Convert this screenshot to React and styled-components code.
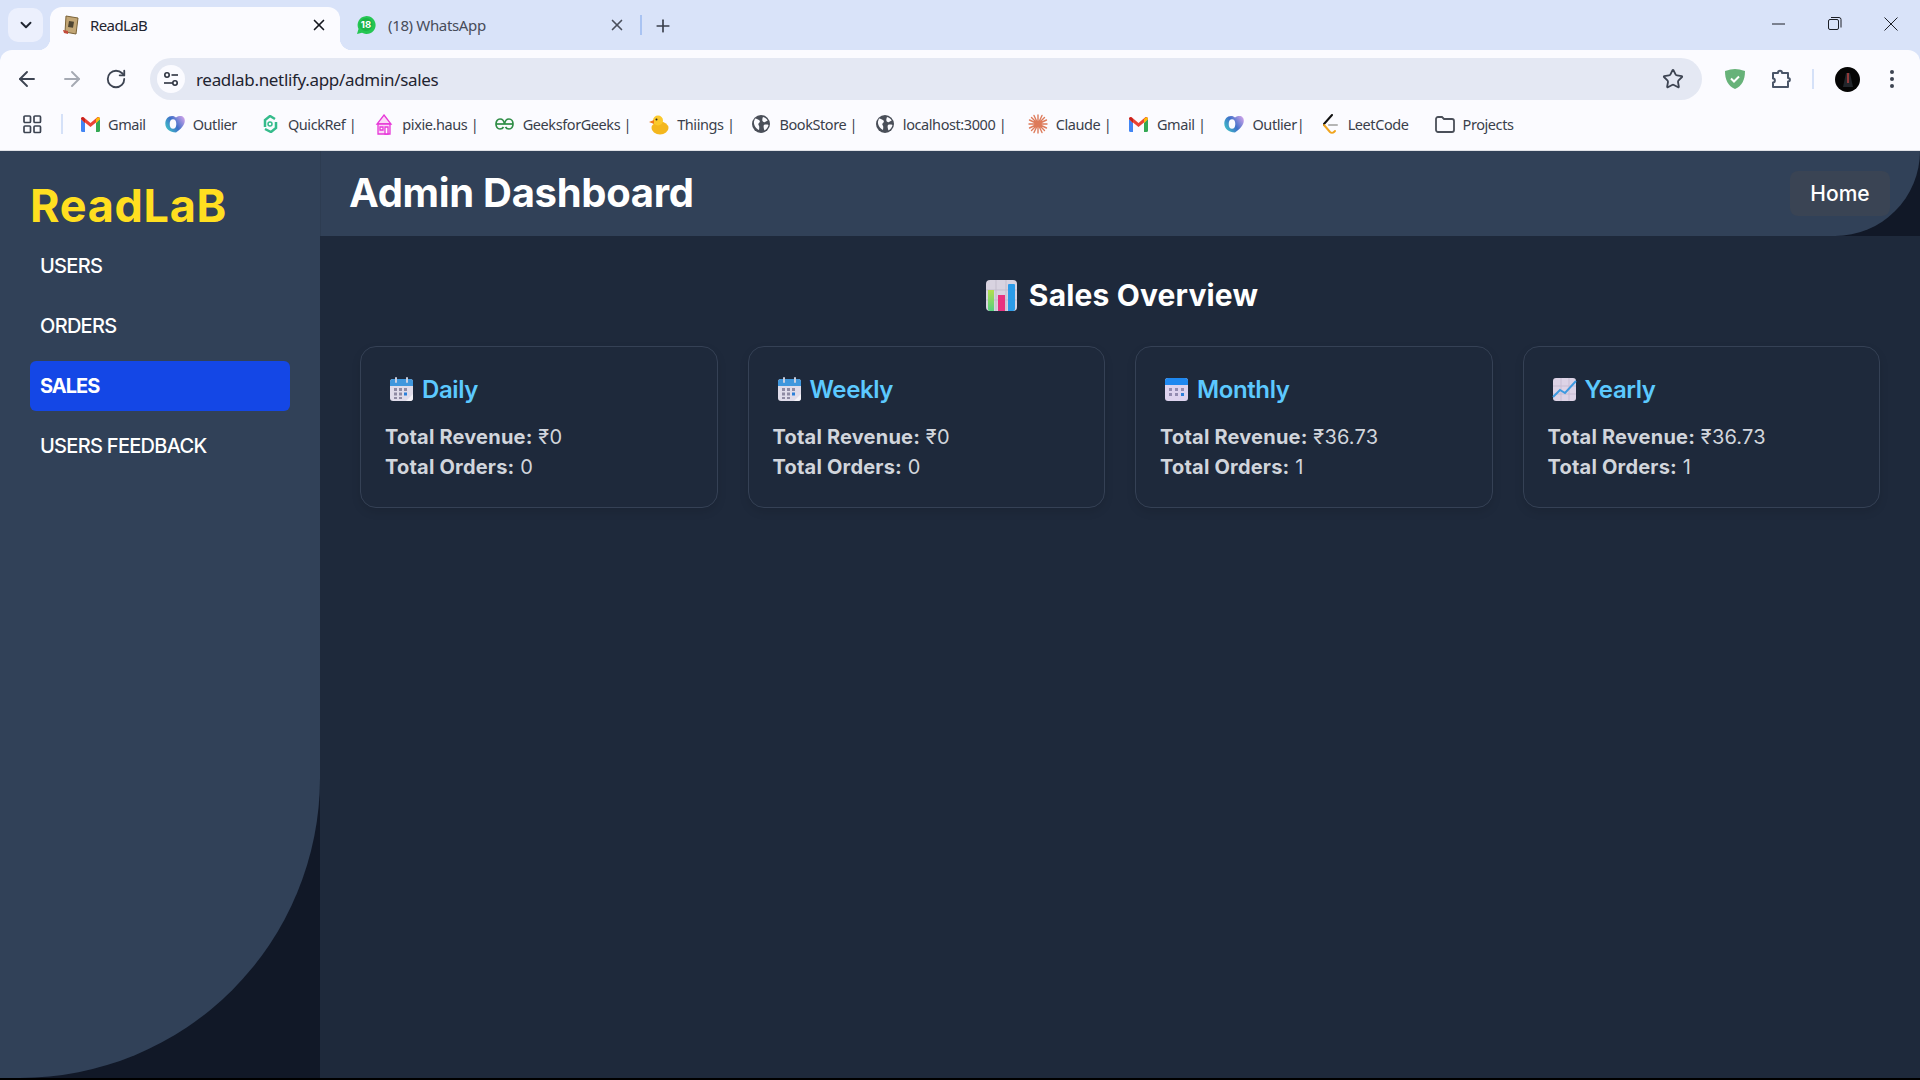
import React from "react";
import styled, { createGlobalStyle } from "styled-components";
import { ArrowLeft, ArrowRight, RotateCw, Star, X, Plus, ChevronDown } from "lucide-react";

const Global = createGlobalStyle`
  html, body { margin: 0; padding: 0; background: #000; }
  #root { width: 1920px; height: 1080px; overflow: hidden; }
  * { box-sizing: border-box; }
`;

const uiFont = `"Noto Sans", "Open Sans", sans-serif`;
const appFont = `Inter, "Noto Sans", sans-serif`;

const Page = styled.div`
  width: 1920px;
  height: 1078px;
  display: flex;
  flex-direction: column;
  background: #d9e3f9;
`;

/* ---------- browser chrome ---------- */
const TabStrip = styled.div`
  height: 50px;
  flex: none;
  display: flex;
  align-items: flex-end;
  padding-left: 8px;
  font-family: ${uiFont};
`;
const TabMenu = styled.div`
  width: 35px;
  height: 34px;
  margin-bottom: 8px;
  margin-right: 7px;
  border-radius: 10px;
  background: #ecf0fd;
  display: flex;
  align-items: center;
  justify-content: center;
  color: #1f2430;
`;
const Tab = styled.div`
  position: relative;
  width: ${(p) => (p.$active ? "290px" : "298px")};
  height: ${(p) => (p.$active ? "43px" : "40px")};
  display: flex;
  align-items: center;
  padding: ${(p) => (p.$active ? "0 12px 8px 12px" : "0 12px 0 16px")};
  margin-bottom: ${(p) => (p.$active ? "0" : "5px")};
  border-radius: 12px 12px 0 0;
  background: ${(p) => (p.$active ? "#fbfbff" : "transparent")};
  ${(p) =>
    p.$active &&
    `
    &::before, &::after {
      content: "";
      position: absolute;
      bottom: 0;
      width: 12px;
      height: 12px;
    }
    &::before { left: -12px; background: radial-gradient(circle at 0 0, transparent 12px, #fbfbff 12.5px); }
    &::after { right: -12px; background: radial-gradient(circle at 100% 0, transparent 12px, #fbfbff 12.5px); }
  `}
`;
const TabTitle = styled.span`
  flex: 1;
  margin-left: ${(p) => (p.$active ? "10px" : "12px")};
  font-size: 15px;
  letter-spacing: ${(p) => (p.$active ? "-0.6px" : "-0.35px")};
  color: ${(p) => (p.$active ? "#1f2430" : "#474c5a")};
`;
const TabClose = styled.span`
  display: flex;
  color: ${(p) => (p.$active ? "#14171f" : "#4a4f5c")};
`;
const TabSep = styled.div`
  width: 2px;
  height: 20px;
  margin: 0 0 15px 2px;
  background: #a9c3f2;
`;
const NewTab = styled.div`
  margin: 0 0 14px 11px;
  display: flex;
  color: #3a3f4b;
`;
const WindowControls = styled.div`
  margin-left: auto;
  align-self: flex-start;
  height: 48px;
  display: flex;
  align-items: center;
  gap: 42px;
  padding-right: 22px;
`;
const Toolbar = styled.div`
  height: 58px;
  flex: none;
  display: flex;
  align-items: center;
  background: #fbfbff;
  border-radius: 12px 12px 0 0;
  font-family: ${uiFont};
`;
const NavButtons = styled.div`
  width: 150px;
  flex: none;
  display: flex;
  align-items: center;
  gap: 21px;
  padding-left: 15px;
`;
const Omnibox = styled.div`
  width: 1552px;
  height: 42px;
  flex: none;
  display: flex;
  align-items: center;
  padding: 0 18px 0 7px;
  border-radius: 21px;
  background: #e4e8f3;
`;
const SiteInfo = styled.div`
  width: 28px;
  height: 28px;
  border-radius: 50%;
  background: #fbfbff;
  display: flex;
  align-items: center;
  justify-content: center;
  flex: none;
`;
const Url = styled.span`
  flex: 1;
  margin-left: 11px;
  font-size: 17px;
  letter-spacing: -0.32px;
  color: #1f2430;
`;
const ToolActions = styled.div`
  flex: 1;
  display: flex;
  align-items: center;
  padding-left: 22px;
`;
const ExtensionSpacer = styled.span`
  width: 24px;
`;
const ActionSep = styled.div`
  width: 2px;
  height: 20px;
  margin: 0 21px 0 20px;
  background: #d5e1f8;
`;
const Avatar = styled.div`
  width: 25px;
  height: 25px;
  border-radius: 50%;
  background: #050505;
  display: flex;
  align-items: center;
  justify-content: center;
`;
const Kebab = styled.div`
  margin-left: 29px;
  display: flex;
`;
const BookmarkBar = styled.div`
  height: 43px;
  flex: none;
  display: flex;
  align-items: center;
  padding: 0 0 10px 23px;
  background: #fbfbff;
  border-bottom: 1px solid #dfe1e6;
  font-family: ${uiFont};
  font-size: 14.5px;
  letter-spacing: -0.42px;
  color: #3a3f4b;
`;
const AppsSep = styled.div`
  width: 2px;
  height: 20px;
  margin: 0 17px 0 19px;
  background: #d5e1f8;
`;
const Bookmark = styled.div`
  display: flex;
  align-items: center;
  gap: 8px;
  margin-right: ${(p) => p.$gap}px;
  white-space: nowrap;
`;
const BookmarkIcon = styled.span`
  width: 20px;
  height: 20px;
  flex: none;
  display: flex;
  align-items: center;
  justify-content: center;
`;

/* ---------- application ---------- */
const Shell = styled.div`
  flex: 1;
  min-height: 0;
  display: flex;
  background: #111827;
  font-family: ${appFont};
  color: #fff;
`;
const Sidebar = styled.aside`
  width: 320px;
  flex: none;
  padding: 30px 30px 0;
  background: #314158;
  border-bottom-right-radius: 300px;
`;
const Logo = styled.div`
  height: 50px;
  margin-bottom: 10px;
  font-size: 45px;
  line-height: 50px;
  font-weight: 700;
  letter-spacing: 0.7px;
  color: #ffdf20;
`;
const NavList = styled.nav`
  display: flex;
  flex-direction: column;
  gap: 10px;
`;
const NavItem = styled.div`
  height: 50px;
  padding: 0 10px;
  display: flex;
  align-items: center;
  border-radius: 6px;
  font-size: 20px;
  font-weight: ${(p) => (p.$active ? 700 : 500)};
  letter-spacing: ${(p) => (p.$active ? "-1px" : "-0.7px")};
  background: ${(p) => (p.$active ? "#1447e6" : "transparent")};
`;
const MainColumn = styled.div`
  flex: 1;
  min-width: 0;
  display: flex;
  flex-direction: column;
`;
const Header = styled.header`
  height: 85px;
  flex: none;
  display: flex;
  align-items: center;
  justify-content: space-between;
  padding: 0 30px 0 28px;
  background: #314158;
  border-left: 1px solid #2d3c51;
  border-bottom-right-radius: 85px;
`;
const PageTitle = styled.h1`
  margin: 0 0 1px;
  font-size: 40px;
  line-height: 46px;
  font-weight: 700;
  letter-spacing: -0.3px;
`;
const HomeButton = styled.div`
  width: 100px;
  height: 45px;
  display: flex;
  align-items: center;
  justify-content: center;
  border-radius: 8px;
  background: #3a4454;
  font-size: 21px;
  font-weight: 500;
`;
const Content = styled.main`
  flex: 1;
  padding: 40px;
  background: #1e293b;
`;
const SectionTitle = styled.h2`
  margin: 0 0 32px;
  padding-left: 4px;
  display: flex;
  align-items: center;
  justify-content: center;
  gap: 12px;
  font-size: 30px;
  line-height: 38px;
  font-weight: 700;
  letter-spacing: 0.15px;
`;
const CardGrid = styled.div`
  display: grid;
  grid-template-columns: repeat(4, 1fr);
  gap: 30px;
`;
const Card = styled.section`
  height: 162px;
  padding: 24px 24px;
  border: 1px solid #354155;
  border-radius: 16px;
  background: #1e293b;
  box-shadow: 0 4px 10px rgba(0, 0, 0, 0.1);
`;
const CardTitle = styled.h3`
  margin: 0 0 15px;
  height: 36px;
  display: flex;
  align-items: center;
  gap: 8px;
  padding-left: 4px;
  font-size: 24px;
  font-weight: 600;
  letter-spacing: -0.4px;
  color: #5cc9ff;
`;
const StatLine = styled.p`
  margin: 0;
  font-size: 20px;
  line-height: 30px;
  color: #d1d5dc;
  letter-spacing: 0.2px;
`;
const StatLabel = styled.strong`
  font-weight: 700;
`;

/* ---------- drawings ---------- */
const Tune = () => (
  <svg width="18" height="18" viewBox="0 0 18 18" fill="none" stroke="#2d3340" strokeWidth="1.6">
    <circle cx="5" cy="5" r="2.2" />
    <path d="M9.5 5H16" />
    <circle cx="13" cy="13" r="2.2" />
    <path d="M2 13h8.5" />
  </svg>
);
const Minimize = () => (
  <svg width="14" height="14" viewBox="0 0 14 14" stroke="#1c1f26" strokeWidth="1">
    <path d="M0 7h13" />
  </svg>
);
const Restore = () => (
  <svg width="14" height="14" viewBox="0 0 14 14" fill="none" stroke="#1c1f26" strokeWidth="1">
    <rect x="0.5" y="2.5" width="10" height="10" rx="1.5" />
    <path d="M3 .5h8a2 2 0 0 1 2 2v8" />
  </svg>
);
const CloseWin = () => (
  <svg width="14" height="14" viewBox="0 0 14 14" stroke="#1c1f26" strokeWidth="1">
    <path d="M.5.5l13 13M13.5.5l-13 13" />
  </svg>
);
const Shield = () => (
  <svg width="22" height="22" viewBox="0 0 22 22">
    <path d="M11 1c3 0 6 .7 10 2 0 9-3 15-10 18C4 18 1 12 1 3c4-1.300 7-2 10-2z" fill="#67b279" />
    <path d="M7 10.500l3 3 5-5" fill="none" stroke="#fff" strokeWidth="2" />
  </svg>
);
const Puzzle = () => (
  <svg width="22" height="22" viewBox="0 0 22 22" fill="none" stroke="#4a5568" strokeWidth="2" strokeLinejoin="round">
    <path d="M3 5h5c0-3 4-3 4 0h6v5c2.500 0 2.500 3.500 0 3.500V19H3v-4.500c2.500 0 2.500-4 0-4z" />
  </svg>
);
const Dots = () => (
  <svg width="6" height="20" viewBox="0 0 6 20" fill="#3d4452">
    <circle cx="3" cy="3" r="2" />
    <circle cx="3" cy="10" r="2" />
    <circle cx="3" cy="17" r="2" />
  </svg>
);
const AvatarArt = () => (
  <svg width="14" height="16" viewBox="0 0 14 16">
    <path d="M2 16L5 2h4l3 14z" fill="#22262b" />
    <path d="M7 2v10" stroke="#b8413f" strokeWidth="1.500" />
  </svg>
);
const Apps = () => (
  <svg width="19" height="19" viewBox="0 0 19 19" fill="none" stroke="#3d4452" strokeWidth="1.700">
    <rect x="1" y="1" width="6.500" height="6.500" rx="1" />
    <rect x="11" y="1" width="6.500" height="6.500" rx="1" />
    <rect x="1" y="11" width="6.500" height="6.500" rx="1" />
    <rect x="11" y="11" width="6.500" height="6.500" rx="1" />
  </svg>
);
const Gmail = () => (
  <svg width="19" height="15" viewBox="0 0 19 15">
    <path d="M0 2v11.500A1.500 1.500 0 0 0 1.500 15H4V6z" fill="#4285f4" />
    <path d="M15 15h2.500a1.500 1.500 0 0 0 1.500-1.500V2l-4 4z" fill="#34a853" />
    <path d="M0 2c0-2 2-2.500 3-1.500L9.500 6 16 .5C17 -.5 19 0 19 2l-4 4v-.5L9.500 10 4 5.500V6z" fill="#ea4335" />
    <path d="M15 6l4-4c0-1-.8-2-2-1.700L15 2z" fill="#fbbc04" />
    <path d="M0 2l4 4V2L2 .3C1 0 0 1 0 2z" fill="#c5221f" />
  </svg>
);
const Outlier = () => (
  <svg width="20" height="18" viewBox="0 0 20 18">
    <defs>
      <linearGradient id="ol" x1="0" y1="0.8" x2="1" y2="0.2">
        <stop offset="0" stopColor="#3fc6c6" />
        <stop offset=".5" stopColor="#3f70c9" />
        <stop offset="1" stopColor="#c7a0e8" />
      </linearGradient>
    </defs>
    <path d="M7 1c2 0 3 .6 4 1.500C12.500 1.300 14 1 15.500 1 18 1 20 3 19.800 6c-.3 4.500-4.300 8.500-8.800 11.500C5 17.500.3 14 .3 8.500.3 4 3.200 1 7 1z" fill="url(#ol)" />
    <ellipse cx="8" cy="9" rx="3.300" ry="4.800" fill="#fbfbff" />
  </svg>
);
const QuickRef = () => (
  <svg width="18" height="18" viewBox="0 0 18 18" fill="none" stroke="#35bb8b" strokeWidth="2.500">
    <path d="M4 12V5l5-4 5 3" />
    <path d="M15 7v6l-5 4-6-3" />
    <circle cx="9" cy="9" r="2" strokeWidth="1.500" />
  </svg>
);
const Pixie = () => (
  <svg width="18" height="21" viewBox="0 0 18 21" fill="#fbd7f6" stroke="#e637d8" strokeWidth="1.300">
    <path d="M9 1l7 9H2z" />
    <path d="M3 10h12v10H3z" />
    <path d="M5 13h3v3H5zM10 13h3v7h-3z" fill="#fff" />
  </svg>
);
const Gfg = () => (
  <svg width="19" height="12" viewBox="0 0 19 12" fill="none" stroke="#2f8d46" strokeWidth="1.700">
    <path d="M1 6h17" />
    <path d="M9.500 6C9 2.500 7 1 5 1 2.500 1 1 3.300 1 6s1.500 5 4 5c2 0 3-1 3.500-2" />
    <path d="M9.500 6C10 2.500 12 1 14 1c2.500 0 4 2.300 4 5s-1.500 5-4 5c-2 0-3-1-3.500-2" />
  </svg>
);
const Duck = () => (
  <svg width="20" height="21" viewBox="0 0 20 21">
    <ellipse cx="11" cy="14" rx="8.500" ry="6.500" fill="#f4b71e" />
    <circle cx="9" cy="6.500" r="5" fill="#fbc92c" />
    <path d="M5 6L0 8l5 2z" fill="#f07a1a" />
    <circle cx="7.500" cy="5.500" r="1" fill="#222" />
  </svg>
);
const Globe = () => (
  <svg width="18" height="18" viewBox="0 0 18 18">
    <circle cx="9" cy="9" r="9" fill="#4a4f59" />
    <path d="M3 3.500c2 .2 3 1 4.500 2 .8.600.3 2-.5 2.500-.7.500-1 1.500-.2 2.500.7 1 .5 2.500.2 4.500C4 13.500 1.500 10 2 6.500zM11 2c2 .5 3.700 1.800 4.700 3.500L13 7c-1 .5-2 0-2.500-1S10.500 3 11 2zM12 10c1-.7 3.500-.5 4.500 0-.5 2.500-2 4.500-4 5.500-.5-1.500-1.500-4.500-.5-5.500z" fill="#fbfbff" />
  </svg>
);
const Claude = () => (
  <svg width="20" height="20" viewBox="0 0 20 20" stroke="#dd7a5a" strokeWidth="1.400" strokeLinecap="round">
    <path d="M10 1v18M1 10h18M3.500 3.500l13 13M16.500 3.500l-13 13M6 1.500l8 17M14 1.500l-8 17M1.500 6l17 8M18.500 6l-17 8" />
  </svg>
);
const LeetCode = () => (
  <svg width="16" height="21" viewBox="0 0 16 21" fill="none" strokeWidth="2" strokeLinecap="round">
    <path d="M10 1L2 10l0 1" stroke="#111" />
    <path d="M2 11l6 7c1 1 3 1 4 0l1-1" stroke="#f0a520" />
    <path d="M7 11h8" stroke="#b5b5b5" />
  </svg>
);
const Folder = () => (
  <svg width="20" height="17" viewBox="0 0 20 17" fill="none" stroke="#4a4f59" strokeWidth="1.800">
    <path d="M1 3a2 2 0 0 1 2-2h4l2 2h8a2 2 0 0 1 2 2v9a2 2 0 0 1-2 2H3a2 2 0 0 1-2-2z" />
  </svg>
);
const TabBook = () => (
  <svg width="18" height="20" viewBox="0 0 18 20">
    <path d="M4 1l12 2-2 16-11-2z" fill="#c2a676" stroke="#7a6238" strokeWidth="1" />
    <path d="M7 6l5 .8-1 6-5-.8z" fill="#4f4532" />
    <path d="M1 15l5 1 0 3-4-1z" fill="#c14a3a" />
  </svg>
);
const WhatsApp = () => (
  <svg width="20" height="20" viewBox="0 0 20 20">
    <path d="M1 19l1.500-5A9 9 0 1 1 6 17.800z" fill="#25c653" />
    <circle cx="10" cy="9.500" r="6.500" fill="#1bb446" />
    <text x="10" y="13" textAnchor="middle" fontFamily="Inter, sans-serif" fontSize="9.500" fontWeight="700" fill="#fff">18</text>
  </svg>
);

const BarChart = () => (
  <svg width="31" height="31" viewBox="0 0 31 31">
    <rect width="31" height="31" rx="4" fill="#d8d3e0" />
    <path d="M0 10h31M0 20h31M10 0v31M20 0v31" stroke="#c3bdcc" strokeWidth="1" />
    <defs>
      <linearGradient id="bg" x1="0" y1="0" x2="0" y2="1">
        <stop offset="0" stopColor="#b4de4e" />
        <stop offset="1" stopColor="#55d07f" />
      </linearGradient>
    </defs>
    <path d="M2 10h6v21H4a2 2 0 0 1-2-2z" fill="url(#bg)" />
    <rect x="12" y="15" width="7" height="16" fill="#e8337f" />
    <path d="M22 5a1 1 0 0 1 1-1h5a1 1 0 0 1 1 1v24a2 2 0 0 1-2 2h-5z" fill="#2b9be8" />
  </svg>
);
const CalendarRings = () => (
  <svg width="25" height="25" viewBox="0 0 25 25">
    <rect x="1" y="2" width="23" height="22" rx="3" fill="#e0dcea" />
    <path d="M1 9V5a3 3 0 0 1 3-3h17a3 3 0 0 1 3 3v4z" fill="#3f97dd" />
    <rect x="6" y="0" width="2" height="6" rx="1" fill="#c9cfe0" />
    <rect x="17" y="0" width="2" height="6" rx="1" fill="#c9cfe0" />
    <g fill="#8f8ba3">
      <rect x="5" y="11" width="3" height="3" /><rect x="10" y="11" width="3" height="3" /><rect x="15" y="11" width="3" height="3" />
      <rect x="5" y="15.500" width="3" height="3" /><rect x="10" y="15.500" width="3" height="3" />
      <rect x="5" y="20" width="3" height="2" /><rect x="10" y="20" width="3" height="2" />
    </g>
    <rect x="15" y="15.500" width="3" height="3" fill="#2b7fd9" />
    <path d="M24 17l-7 7h4a3 3 0 0 0 3-3z" fill="#f4f2f8" />
  </svg>
);
const CalendarPlain = () => (
  <svg width="25" height="25" viewBox="0 0 25 25">
    <rect x="1" y="1" width="23" height="23" rx="3" fill="#ddd3ee" />
    <path d="M1 8V4a3 3 0 0 1 3-3h17a3 3 0 0 1 3 3v4z" fill="#1e88f0" />
    <g fill="#928bb0">
      <rect x="5" y="11" width="3" height="3" /><rect x="11" y="11" width="3" height="3" /><rect x="17" y="11" width="3" height="3" />
      <rect x="5" y="16" width="3" height="3" /><rect x="11" y="16" width="3" height="3" />
    </g>
    <rect x="17" y="16" width="3" height="3" fill="#2b7fd9" />
  </svg>
);
const LineChart = () => (
  <svg width="25" height="25" viewBox="0 0 25 25">
    <rect x="1" y="1" width="23" height="23" rx="3" fill="#ddd3e6" />
    <path d="M1 9h23M1 17h23M9 1v23M17 1v23" stroke="#c8bdd3" strokeWidth="1" />
    <path d="M1 20l7-7 5 3L24 4" fill="none" stroke="#3d9ae0" strokeWidth="2" />
  </svg>
);

const bookmarks = [
  { Icon: Gmail, label: "Gmail", gap: 19 },
  { Icon: Outlier, label: "Outlier", gap: 23 },
  { Icon: QuickRef, label: "QuickRef |", gap: 18 },
  { Icon: Pixie, label: "pixie.haus |", gap: 16.5 },
  { Icon: Gfg, label: "GeeksforGeeks |", gap: 18 },
  { Icon: Duck, label: "Thiings |", gap: 17 },
  { Icon: Globe, label: "BookStore |", gap: 17.7 },
  { Icon: Globe, label: "localhost:3000 |", gap: 21.5 },
  { Icon: Claude, label: "Claude |", gap: 17.7 },
  { Icon: Gmail, label: "Gmail |", gap: 19 },
  { Icon: Outlier, label: "Outlier|", gap: 15.4 },
  { Icon: LeetCode, label: "LeetCode", gap: 26 },
  { Icon: Folder, label: "Projects", gap: 0 },
];

const navItems = ["USERS", "ORDERS", "SALES", "USERS FEEDBACK"];

const cards = [
  { Icon: CalendarRings, title: "Daily", revenue: "₹0", orders: "0" },
  { Icon: CalendarRings, title: "Weekly", revenue: "₹0", orders: "0" },
  { Icon: CalendarPlain, title: "Monthly", revenue: "₹36.73", orders: "1" },
  { Icon: LineChart, title: "Yearly", revenue: "₹36.73", orders: "1" },
];

export default function App() {
  return (
    <>
      <Global />
      <Page>
        <TabStrip>
          <TabMenu><ChevronDown size={18} strokeWidth={2.5} /></TabMenu>
          <Tab $active>
            <TabBook />
            <TabTitle $active>ReadLaB</TabTitle>
            <TabClose $active><X size={18} strokeWidth={2.2} /></TabClose>
          </Tab>
          <Tab>
            <WhatsApp />
            <TabTitle>(18) WhatsApp</TabTitle>
            <TabClose><X size={18} strokeWidth={2.2} /></TabClose>
          </Tab>
          <TabSep />
          <NewTab><Plus size={20} strokeWidth={2} /></NewTab>
          <WindowControls>
            <Minimize />
            <Restore />
            <CloseWin />
          </WindowControls>
        </TabStrip>
        <Toolbar>
          <NavButtons>
            <ArrowLeft size={24} color="#3d4452" strokeWidth={1.9} />
            <ArrowRight size={24} color="#a5a9b3" strokeWidth={1.9} />
            <RotateCw size={22} color="#3d4452" strokeWidth={2} />
          </NavButtons>
          <Omnibox>
            <SiteInfo><Tune /></SiteInfo>
            <Url>readlab.netlify.app/admin/sales</Url>
            <Star size={22} color="#3d4452" strokeWidth={2} />
          </Omnibox>
          <ToolActions>
            <Shield />
            <ExtensionSpacer />
            <Puzzle />
            <ActionSep />
            <Avatar><AvatarArt /></Avatar>
            <Kebab><Dots /></Kebab>
          </ToolActions>
        </Toolbar>
        <BookmarkBar>
          <Apps />
          <AppsSep />
          {bookmarks.map(({ Icon, label, gap }, i) => (
            <Bookmark key={i} $gap={gap}>
              <BookmarkIcon><Icon /></BookmarkIcon>
              {label}
            </Bookmark>
          ))}
        </BookmarkBar>
        <Shell>
          <Sidebar>
            <Logo>ReadLaB</Logo>
            <NavList>
              {navItems.map((n) => (
                <NavItem key={n} $active={n === "SALES"}>{n}</NavItem>
              ))}
            </NavList>
          </Sidebar>
          <MainColumn>
            <Header>
              <PageTitle>Admin Dashboard</PageTitle>
              <HomeButton>Home</HomeButton>
            </Header>
            <Content>
              <SectionTitle><BarChart />Sales Overview</SectionTitle>
              <CardGrid>
                {cards.map(({ Icon, title, revenue, orders }) => (
                  <Card key={title}>
                    <CardTitle><Icon />{title}</CardTitle>
                    <StatLine><StatLabel>Total Revenue:</StatLabel> {revenue}</StatLine>
                    <StatLine><StatLabel>Total Orders:</StatLabel> {orders}</StatLine>
                  </Card>
                ))}
              </CardGrid>
            </Content>
          </MainColumn>
        </Shell>
      </Page>
    </>
  );
}
